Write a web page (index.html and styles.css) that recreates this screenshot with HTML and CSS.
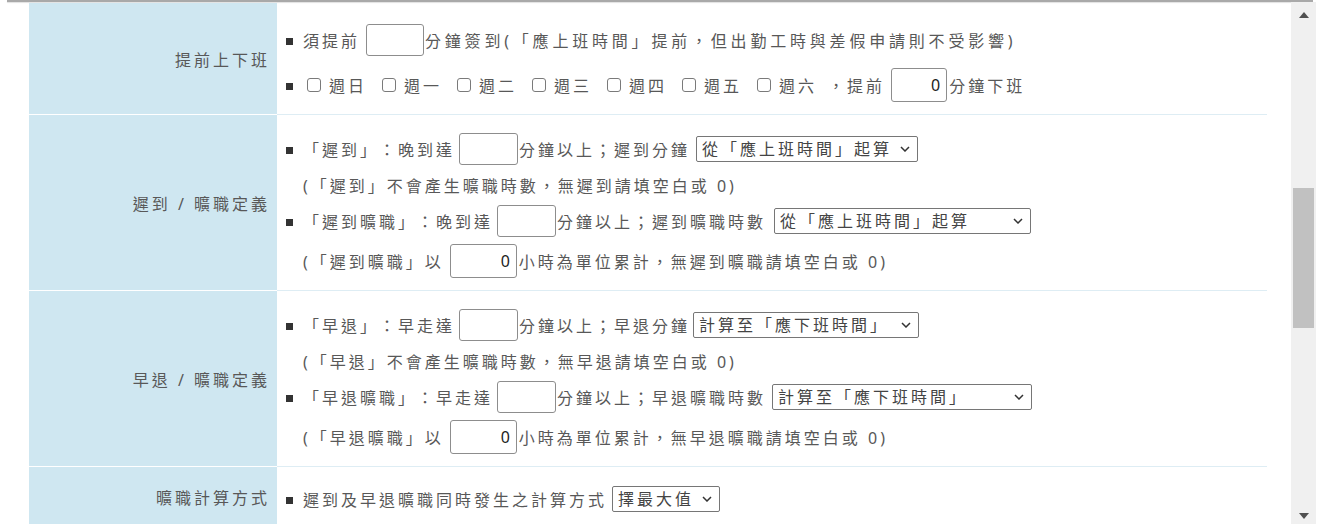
FILE: index.html
```html
<!DOCTYPE html>
<html lang="zh-Hant">
<head>
<meta charset="utf-8">
<title>出勤設定</title>
<link rel="stylesheet" href="styles.css">
</head>
<body>
<div class="topline"></div>
<div class="frame">
  <div class="content">
    <div class="table">
      <div class="label">提前上下班</div>
      <div class="cell r1">
        <div class="line">
          <span class="bullet"></span><span>須提前</span><input class="num w58 ml6" type="text" value=""><span class="ml1 wide">分鐘簽到(「應上班時間」提前，但出勤工時與差假申請則不受影響)</span>
        </div>
        <div class="line gap7">
          <span class="bullet"></span>
          <label class="day"><input type="checkbox">週日</label>
          <label class="day"><input type="checkbox">週一</label>
          <label class="day"><input type="checkbox">週二</label>
          <label class="day"><input type="checkbox">週三</label>
          <label class="day"><input type="checkbox">週四</label>
          <label class="day"><input type="checkbox">週五</label>
          <label class="day"><input type="checkbox">週六</label>
          <span>，提前</span><input class="num w56 ml6 h33" type="text" value="0"><span class="ml2">分鐘下班</span>
        </div>
      </div>

      <div class="label">遲到 / 曠職定義</div>
      <div class="cell r2">
        <div class="line">
          <span class="bullet"></span><span>「遲到」：晚到達</span><input class="num w59 ml4" type="text" value=""><span class="ml1">分鐘以上；遲到分鐘</span>
          <span class="selwrap ml6"><select class="sel s1"><option>從「應上班時間」起算</option></select><svg class="chev" width="10" height="6" viewBox="0 0 10 6"><path d="M1 1l4 4 4-4" fill="none" stroke="#333" stroke-width="1.5"/></svg></span>
        </div>
        <div class="line sub h34"><span>(「遲到」不會產生曠職時數，無遲到請填空白或 0)</span></div>
        <div class="line">
          <span class="bullet"></span><span>「遲到曠職」：晚到達</span><input class="num w59 ml4" type="text" value=""><span class="ml1">分鐘以上；遲到曠職時數</span>
          <span class="selwrap ml8"><select class="sel s2"><option>從「應上班時間」起算</option></select><svg class="chev" width="10" height="6" viewBox="0 0 10 6"><path d="M1 1l4 4 4-4" fill="none" stroke="#333" stroke-width="1.5"/></svg></span>
        </div>
        <div class="line sub h42"><span>(「遲到曠職」以</span><input class="num w67 ml6 h33" type="text" value="0"><span class="ml2">小時為單位累計，無遲到曠職請填空白或 0)</span></div>
      </div>

      <div class="label">早退 / 曠職定義</div>
      <div class="cell r2">
        <div class="line">
          <span class="bullet"></span><span>「早退」：早走達</span><input class="num w59 ml4" type="text" value=""><span class="ml1">分鐘以上；早退分鐘</span>
          <span class="selwrap ml3"><select class="sel s3"><option>計算至「應下班時間」</option></select><svg class="chev" width="10" height="6" viewBox="0 0 10 6"><path d="M1 1l4 4 4-4" fill="none" stroke="#333" stroke-width="1.5"/></svg></span>
        </div>
        <div class="line sub h34"><span>(「早退」不會產生曠職時數，無早退請填空白或 0)</span></div>
        <div class="line">
          <span class="bullet"></span><span>「早退曠職」：早走達</span><input class="num w59 ml4" type="text" value=""><span class="ml1">分鐘以上；早退曠職時數</span>
          <span class="selwrap ml6"><select class="sel s4"><option>計算至「應下班時間」</option></select><svg class="chev" width="10" height="6" viewBox="0 0 10 6"><path d="M1 1l4 4 4-4" fill="none" stroke="#333" stroke-width="1.5"/></svg></span>
        </div>
        <div class="line sub h42"><span>(「早退曠職」以</span><input class="num w67 ml6 h33" type="text" value="0"><span class="ml2">小時為單位累計，無早退曠職請填空白或 0)</span></div>
      </div>

      <div class="label">曠職計算方式</div>
      <div class="cell r4">
        <div class="line">
          <span class="bullet"></span><span>遲到及早退曠職同時發生之計算方式</span>
          <span class="selwrap ml5"><select class="sel s5"><option>擇最大值</option></select><svg class="chev" width="10" height="6" viewBox="0 0 10 6"><path d="M1 1l4 4 4-4" fill="none" stroke="#333" stroke-width="1.5"/></svg></span>
        </div>
      </div>
    </div>
  </div>
  <div class="scrollbar">
    <div class="arrow-up"></div>
    <div class="thumb"></div>
    <div class="arrow-down"></div>
  </div>
</div>
</body>
</html>
```

FILE: styles.css
```css
* { box-sizing: border-box; }

body {
  margin: 0;
  height: 524px;
  overflow: hidden;
  background: #fff;
  color: #585858;
  font-family: "Noto Sans", "Noto Sans CJK TC", sans-serif;
  font-size: 16px;
  letter-spacing: 3px;
  text-spacing-trim: space-all;
}

.topline {
  height: 2px;
  margin: 0 8px 0 7px;
  background: #a9a9a9;
  box-shadow: 0 1px 1px rgba(0, 0, 0, 0.12);
}

.frame {
  display: flex;
  height: 522px;
}

.content {
  flex: 1;
  padding: 1px 0 0 29px;
  overflow: hidden;
}

.table {
  width: 1238px;
  display: grid;
  grid-template-columns: 248px 1fr;
}

.label {
  background: #cfe7f1;
  border-bottom: 1px solid #fff;
  display: flex;
  align-items: center;
  justify-content: flex-end;
  padding-right: 7px;
  white-space: nowrap;
}

.cell {
  border-bottom: 1px solid #deedf4;
  display: flex;
  flex-direction: column;
}

.r1 { padding: 18px 0 10px; }
.r2 { padding: 15px 0 8px; }
.r4 { padding: 13px 0 9px; }

.line {
  display: flex;
  align-items: center;
  height: 38px;
  padding-left: 9px;
  white-space: nowrap;
}

.line.sub { padding-left: 26px; }
.h34 { height: 34px; }
.h42 { height: 42px; }
.gap7 { margin-top: 7px; }

.wide { letter-spacing: 3.8px; }

.bullet {
  flex: none;
  width: 7px;
  height: 7px;
  margin: 3px 10px 0 0;
  background: #333;
}

.num {
  flex: none;
  height: 32px;
  margin: 0;
  padding: 0 6px;
  border: 1px solid #8d8d8d;
  border-radius: 3px;
  background: #fff;
  color: #222;
  font-family: "Noto Sans", sans-serif;
  font-size: 16px;
  letter-spacing: 0;
  text-align: right;
}

.num.h33 { height: 34px; }
.w56 { width: 56px; }
.w58 { width: 58px; }
.w59 { width: 59px; }
.w67 { width: 67px; }

.ml1 { margin-left: 1px; }
.ml2 { margin-left: 2px; }
.ml3 { margin-left: 3px; }
.ml4 { margin-left: 4px; }
.ml5 { margin-left: 5px; }
.ml6 { margin-left: 6px; }
.ml8 { margin-left: 8px; }

.selwrap {
  position: relative;
  display: inline-flex;
  flex: none;
}

.sel {
  -webkit-appearance: none;
  appearance: none;
  height: 26px;
  margin: 0;
  padding: 0 20px 0 5px;
  border: 1px solid #767676;
  border-radius: 2px;
  background: #fff;
  color: #444;
  font: inherit;
  letter-spacing: inherit;
  text-spacing-trim: space-all;
}

.chev {
  position: absolute;
  right: 8px;
  top: 10px;
  pointer-events: none;
}

.s1 { width: 222px; }
.s2 { width: 257px; }
.s3 { width: 226px; }
.s4 { width: 260px; }
.s5 { width: 108px; }

.day {
  display: flex;
  align-items: center;
  margin-right: 11px;
}

.day input {
  -webkit-appearance: none;
  appearance: none;
  flex: none;
  width: 14px;
  height: 14px;
  margin: 0 8px 0 4px;
  border: 1px solid #7a7a7a;
  border-radius: 3px;
  background: #fff;
}

.scrollbar {
  flex: none;
  width: 25px;
  margin-right: 5px;
  background: #f0f0f0;
  display: flex;
  flex-direction: column;
  align-items: center;
}

.arrow-up {
  width: 0;
  height: 0;
  margin-top: 10px;
  border-left: 5.5px solid transparent;
  border-right: 5.5px solid transparent;
  border-bottom: 6px solid #505050;
}

.thumb {
  width: 21px;
  height: 140px;
  margin-top: 170px;
  background: #c1c1c1;
}

.arrow-down {
  width: 0;
  height: 0;
  margin-top: auto;
  margin-bottom: 5px;
  border-left: 5.5px solid transparent;
  border-right: 5.5px solid transparent;
  border-top: 6px solid #505050;
}
```
